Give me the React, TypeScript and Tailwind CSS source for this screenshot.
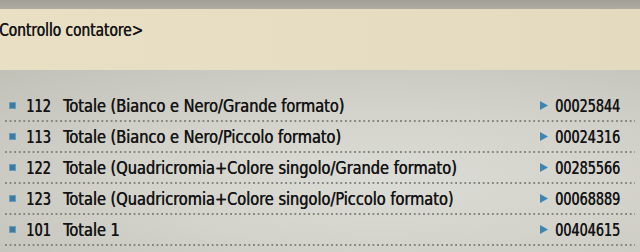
const rows = [
  { code: '112', label: 'Totale (Bianco e Nero/Grande formato)', value: '00025844' },
  { code: '113', label: 'Totale (Bianco e Nero/Piccolo formato)', value: '00024316' },
  { code: '122', label: 'Totale (Quadricromia+Colore singolo/Grande formato)', value: '00285566' },
  { code: '123', label: 'Totale (Quadricromia+Colore singolo/Piccolo formato)', value: '00068889' },
  { code: '101', label: 'Totale 1', value: '00404615' },
]

function Dots() {
  return (
    <div className="mx-[5px] h-[2px] bg-[linear-gradient(to_right,#858680_1.5px,transparent_1.5px)] bg-[length:4.6px_2px]" />
  )
}

export default function App() {
  return (
    <div
      className="w-[640px] h-[252px] overflow-hidden bg-[#a9a79d] text-[#141414] whitespace-nowrap [text-shadow:0.5px_0_0_#141414]"
      style={{ fontFamily: '"DejaVu Sans Condensed", "DejaVu Sans", sans-serif' }}
    >
      <div className="h-[9px] bg-[linear-gradient(to_bottom,#a29f96,#aeaba1)]" />
      <div className="h-[61px] bg-[linear-gradient(to_right,#e8dfc5,#e6ddc2_50%,#e3dac0)] flex items-start pt-[11px]">
        <span className="-ml-[1px] inline-block origin-left scale-x-[0.85] text-[18px] leading-5">
          Controllo contatore&gt;
        </span>
      </div>
      <div className="h-[182px] pt-[21px] bg-[radial-gradient(ellipse_at_60%_60%,#dcdcd6_0%,#d3d3cc_45%,#c2c1b8_100%)]">
        {rows.map((r) => (
          <div key={r.code}>
            <div className="h-[29px] flex items-center">
              <span className="ml-[9px] w-[7px] h-[7px] bg-[#3b7aa2] border border-[#6c9cb8]" />
              <span className="ml-[10px] w-[37px] text-[18px]">
                <span className="inline-block origin-left scale-x-[0.8]">{r.code}</span>
              </span>
              <span className="inline-block origin-left scale-x-[0.9] text-[18px]">{r.label}</span>
              <span className="ml-auto mr-[20px] flex items-center">
                <svg width="8" height="9" viewBox="0 0 8 9" className="mr-[7px]">
                  <path d="M0 0 L8 4.5 L0 9 Z" fill="#3f85b3" />
                </svg>
                <span className="w-[65px] text-[18px]">
                  <span className="inline-block origin-left scale-x-[0.79]">{r.value}</span>
                </span>
              </span>
            </div>
            <Dots />
          </div>
        ))}
      </div>
    </div>
  )
}
